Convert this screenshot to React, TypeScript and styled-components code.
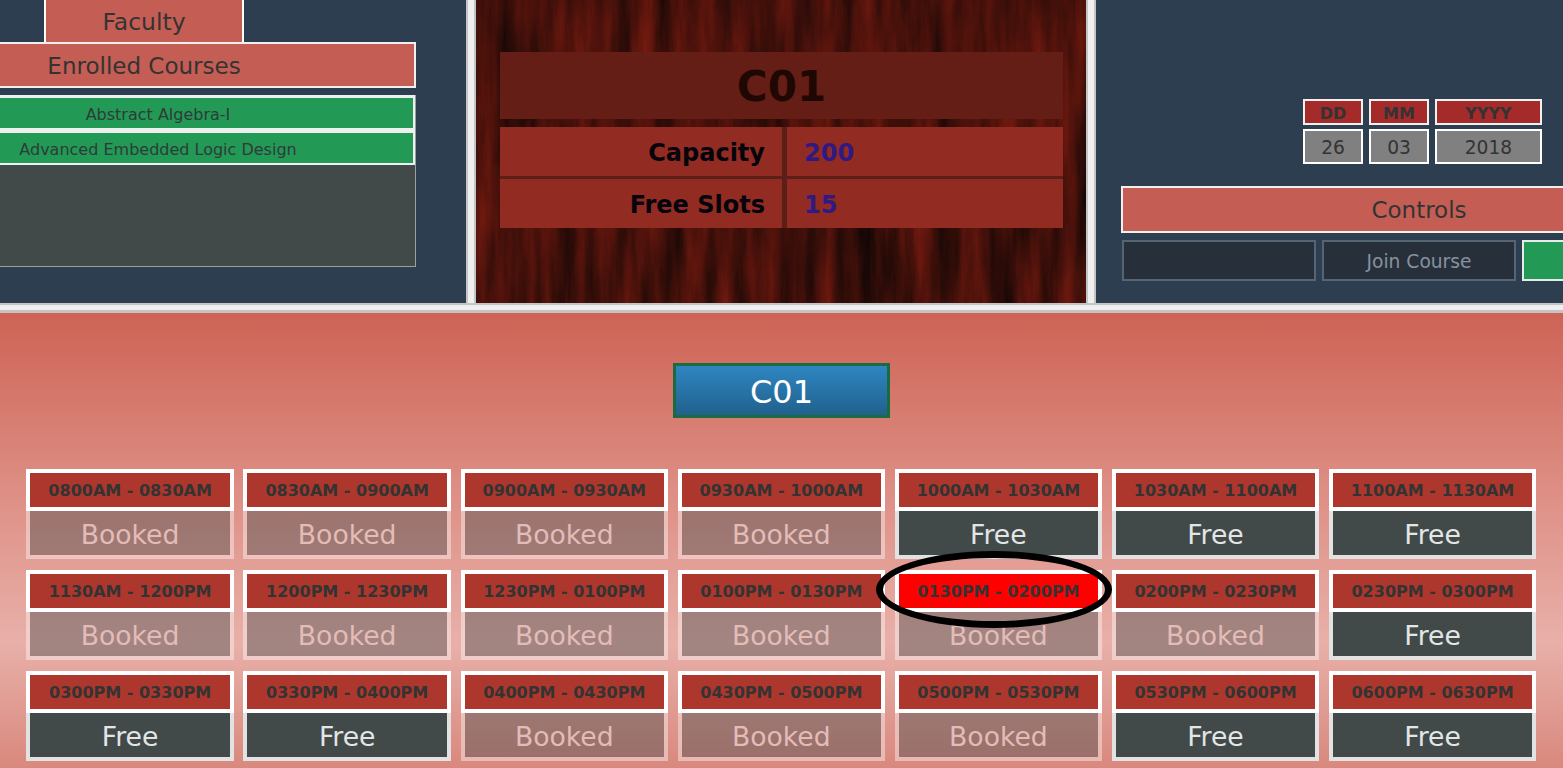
import React from "react";
import styled, { createGlobalStyle } from "styled-components";

const Global = createGlobalStyle`
  html, body { margin: 0; padding: 0; background: #cd6355; }
  body { font-family: "DejaVu Sans", "Liberation Sans", sans-serif; color: #333; }
  * { box-sizing: border-box; }
`;

const Page = styled.div`
  position: relative;
  width: 1563px;
  height: 768px;
  overflow: hidden;
`;
const TopRow = styled.div`
  display: flex;
  height: 303px;
`;
const VRule = styled.div`
  width: 10px;
  flex: none;
  background: linear-gradient(90deg, #c4c4c4 0 2px, #efefef 2px 8px, #c4c4c4 8px);
`;
const HRule = styled.div`
  height: 10px;
  background: linear-gradient(180deg, #c4c4c4 0 2px, #efefef 2px 7px, #c4c4c4 7px);
`;
const NavyPanel = styled.section<{ $w: number }>`
  width: ${(p) => p.$w}px;
  flex: none;
  background: #2c3e50;
  overflow: hidden;
`;
const LeftColumn = styled.div`
  width: 544px;
  margin-left: -128px;
  display: flex;
  flex-direction: column;
`;
const FacultyTab = styled.div`
  align-self: center;
  width: 200px;
  height: 44px;
  background: #c45e54;
  border: 2px solid #fff;
  border-top: 0;
  font-size: 23.5px;
  line-height: 45px;
  text-align: center;
`;
const Title = styled.div<{ $h: number }>`
  height: ${(p) => p.$h}px;
  background: #c45e54;
  border: 2px solid #f4eeee;
  font-size: 23px;
  line-height: ${(p) => p.$h - 1}px;
  text-align: center;
`;
const EnrolledTitle = styled(Title)`
  margin-top: -2px;
`;
const CourseList = styled.div`
  margin-top: 7px;
  height: 172px;
  background: #424949;
  border: 1px solid #9aa0a0;
  border-top: 0;
  padding-left: 28px;
`;
const CourseRow = styled.div`
  height: 35px;
  background: #229954;
  border: 2px solid #ecf0ee;
  border-top-width: 3px;
  font-size: 16px;
  line-height: 33px;
  text-align: center;
  color: #2f3b3a;
`;
const WoodPanel = styled.section`
  position: relative;
  width: 610px;
  flex: none;
  overflow: hidden;
  background: #3a0e08;
  padding: 52px 23px 0 24px;
`;
const WoodArt = styled.svg`
  position: absolute;
  inset: 0;
`;
const InfoTable = styled.div`
  position: relative;
  display: flex;
  flex-direction: column;
`;
const InfoHead = styled.div`
  height: 67px;
  margin-bottom: 8px;
  background: #641e16;
  color: #1f0703;
  font-weight: 700;
  font-size: 42px;
  line-height: 70px;
  text-align: center;
`;
const InfoBody = styled.div`
  display: grid;
  grid-template-columns: 282px 276px;
  grid-auto-rows: 49px;
  gap: 3px 5px;
  background: #5a1f16;
`;
const InfoKey = styled.div`
  background: #922b21;
  color: #05040c;
  font-weight: 700;
  font-size: 24px;
  line-height: 52px;
  padding-right: 17px;
  text-align: right;
`;
const InfoValue = styled.div`
  background: #922b21;
  color: #2f1a84;
  font-weight: 700;
  font-size: 24px;
  line-height: 52px;
  padding-left: 17px;
`;
const RightInner = styled.div`
  width: 660px;
  padding: 99px 0 0 25px;
`;
const DateRow = styled.div`
  display: grid;
  grid-template-columns: 60px 60px 107px;
  gap: 4px 6px;
  width: 596px;
  padding-left: 182px;
`;
const DateHead = styled.div`
  height: 26px;
  background: #a52a2a;
  border: 2px solid #f5f0f0;
  font-size: 16px;
  font-weight: 700;
  line-height: 25px;
  text-align: center;
`;
const DateValue = styled.div`
  height: 35px;
  background: #808080;
  border: 2px solid #fff;
  font-size: 18.67px;
  line-height: 33px;
  text-align: center;
`;
const ControlsTitle = styled(Title)`
  width: 596px;
  margin-top: 22px;
  line-height: 44px;
`;
const ButtonRow = styled.div`
  display: flex;
  gap: 6px;
  margin: 7px 0 0 1px;
`;
const ActionButton = styled.div<{ $on?: boolean }>`
  width: 194px;
  height: 41px;
  background: ${(p) => (p.$on ? "#229954" : "#27303a")};
  border: 2px solid ${(p) => (p.$on ? "#e4ece8" : "#566573")};
  color: #85929e;
  font-size: 18.67px;
  line-height: 40px;
  text-align: center;
`;
const Schedule = styled.section`
  height: 455px;
  background: linear-gradient(180deg, #cd6355 0, #de8f85 180px, #e8b0a9 330px, #d9887d 455px);
  padding-top: 50px;
`;
const RoomButton = styled.div`
  width: 217px;
  height: 55px;
  margin: 0 auto 51px;
  background: linear-gradient(180deg, #2e86c1, #21618c);
  border: 3px solid #1a6b42;
  color: #fff;
  font-size: 32px;
  line-height: 52px;
  text-align: center;
`;
const SlotGrid = styled.div`
  display: grid;
  grid-template-columns: repeat(7, 207.4px);
  column-gap: 9.7px;
  row-gap: 10.75px;
  padding-left: 26.4px;
`;
const Slot = styled.div`
  height: 90px;
  display: flex;
  flex-direction: column;
`;
const SlotTime = styled.div<{ $hit?: boolean }>`
  height: 42px;
  background: ${(p) => (p.$hit ? "#ff0000" : "#ad372c")};
  border: 4px solid #fff;
  font-size: 16px;
  font-weight: 700;
  line-height: 36px;
  text-align: center;
`;
const SlotState = styled.div<{ $free: boolean }>`
  height: 48px;
  background: ${(p) => (p.$free ? "#424949" : "rgba(66, 73, 73, 0.42)")};
  background-clip: padding-box;
  border: 4px solid ${(p) => (p.$free ? "#e2e2e2" : "rgba(255, 255, 255, 0.4)")};
  border-top: 0;
  color: ${(p) => (p.$free ? "#e2e6e6" : "#e3bcb8")};
  font-size: 26.67px;
  line-height: 47px;
  text-align: center;
`;
const Ring = styled.div`
  position: absolute;
  left: 876px;
  top: 551px;
  width: 236px;
  height: 77px;
  border: 7px solid #000;
  border-radius: 50%;
`;

const times = [
  "0800AM - 0830AM", "0830AM - 0900AM", "0900AM - 0930AM", "0930AM - 1000AM", "1000AM - 1030AM", "1030AM - 1100AM", "1100AM - 1130AM",
  "1130AM - 1200PM", "1200PM - 1230PM", "1230PM - 0100PM", "0100PM - 0130PM", "0130PM - 0200PM", "0200PM - 0230PM", "0230PM - 0300PM",
  "0300PM - 0330PM", "0330PM - 0400PM", "0400PM - 0430PM", "0430PM - 0500PM", "0500PM - 0530PM", "0530PM - 0600PM", "0600PM - 0630PM",
];
const freeSlots = new Set([4, 5, 6, 13, 14, 15, 19, 20]);

const Wood = () => (
  <WoodArt width="610" height="303" aria-hidden="true">
    <filter id="grain" x="0" y="0" width="100%" height="100%" colorInterpolationFilters="sRGB">
      <feTurbulence type="fractalNoise" baseFrequency="0.05 0.006" numOctaves="6" seed="23" />
      <feColorMatrix
        type="matrix"
        values="0.5 0 0 0 0.02  0.1 0 0 0 0.015  0.05 0 0 0 0.015  0 0 0 0 1"
      />
    </filter>
    <rect width="610" height="303" filter="url(#grain)" />
  </WoodArt>
);

export default function App() {
  return (
    <Page>
      <Global />
      <TopRow>
        <NavyPanel $w={466}>
          <LeftColumn>
            <FacultyTab>Faculty</FacultyTab>
            <EnrolledTitle $h={46}>Enrolled Courses</EnrolledTitle>
            <CourseList>
              <CourseRow>Abstract Algebra-I</CourseRow>
              <CourseRow>Advanced Embedded Logic Design</CourseRow>
            </CourseList>
          </LeftColumn>
        </NavyPanel>
        <VRule />
        <WoodPanel>
          <Wood />
          <InfoTable>
            <InfoHead>C01</InfoHead>
            <InfoBody>
              <InfoKey>Capacity</InfoKey>
              <InfoValue>200</InfoValue>
              <InfoKey>Free Slots</InfoKey>
              <InfoValue>15</InfoValue>
            </InfoBody>
          </InfoTable>
        </WoodPanel>
        <VRule />
        <NavyPanel $w={467}>
          <RightInner>
            <DateRow>
              <DateHead>DD</DateHead>
              <DateHead>MM</DateHead>
              <DateHead>YYYY</DateHead>
              <DateValue>26</DateValue>
              <DateValue>03</DateValue>
              <DateValue>2018</DateValue>
            </DateRow>
            <ControlsTitle $h={47}>Controls</ControlsTitle>
            <ButtonRow>
              <ActionButton />
              <ActionButton>Join Course</ActionButton>
              <ActionButton $on />
            </ButtonRow>
          </RightInner>
        </NavyPanel>
      </TopRow>
      <HRule />
      <Schedule>
        <RoomButton>C01</RoomButton>
        <SlotGrid>
          {times.map((t, i) => (
            <Slot key={t}>
              <SlotTime $hit={i === 11}>{t}</SlotTime>
              <SlotState $free={freeSlots.has(i)}>{freeSlots.has(i) ? "Free" : "Booked"}</SlotState>
            </Slot>
          ))}
        </SlotGrid>
      </Schedule>
      <Ring />
    </Page>
  );
}
